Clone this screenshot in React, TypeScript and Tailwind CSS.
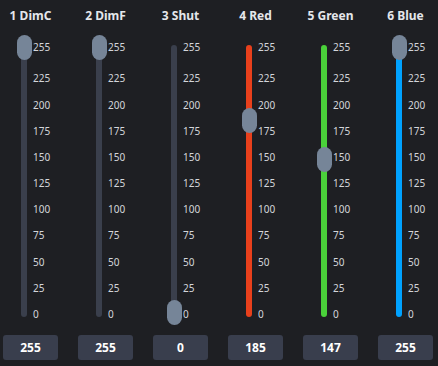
import React from 'react';

interface Channel {
  name: string;
  value: number;
  color: string;
}

const channels: Channel[] = [
  { name: '1 DimC', value: 255, color: 'bg-[#3a3f4c]' },
  { name: '2 DimF', value: 255, color: 'bg-[#3a3f4c]' },
  { name: '3 Shut', value: 0, color: 'bg-[#3a3f4c]' },
  { name: '4 Red', value: 185, color: 'bg-[#e8401c]' },
  { name: '5 Green', value: 147, color: 'bg-[#4ad13a]' },
  { name: '6 Blue', value: 255, color: 'bg-[#00a2ff]' },
];

const ticks = [255, 225, 200, 175, 150, 125, 100, 75, 50, 25, 0];

const Fader: React.FC<{ channel: Channel }> = ({ channel }) => {
  // thumb travels from 15.5px (255) to 280.5px (0) inside the slider area
  const thumbCenter = 15.5 + ((255 - channel.value) * 265) / 255;

  return (
    <div className="flex w-[55px] flex-col items-center">
      <div className="flex h-[32px] items-center text-[12px] font-bold text-[#e5e7eb] whitespace-nowrap">
        {channel.name}
      </div>
      <div className="relative h-[296px] w-full">
        <div className={`absolute left-[18px] top-[13px] h-[272px] w-[6px] rounded-full ${channel.color}`} />
        {ticks.map((t) => (
          <span
            key={t}
            className="absolute left-[30px] -translate-y-1/2 text-[10px] leading-none text-[#d4d6db]"
            style={{ top: 282 - t * 1.047 }}
          >
            {t}
          </span>
        ))}
        <div
          className="absolute left-[14px] h-[25px] w-[15px] rounded-[8px] bg-[#768598]"
          style={{ top: thumbCenter - 12.5 }}
        />
      </div>
      <div className="mt-[7px] flex h-[25px] w-full items-center justify-center rounded-[3px] bg-[#393e4d] text-[12px] font-bold text-white">
        {channel.value}
      </div>
    </div>
  );
};

const App: React.FC = () => {
  return (
    <div
      className="flex h-[366px] w-[438px] gap-5 bg-[#1e1f23] px-[3px]"
      style={{ fontFamily: '"Noto Sans", "Open Sans", sans-serif' }}
    >
      {channels.map((c) => (
        <Fader key={c.name} channel={c} />
      ))}
    </div>
  );
};

export default App;
